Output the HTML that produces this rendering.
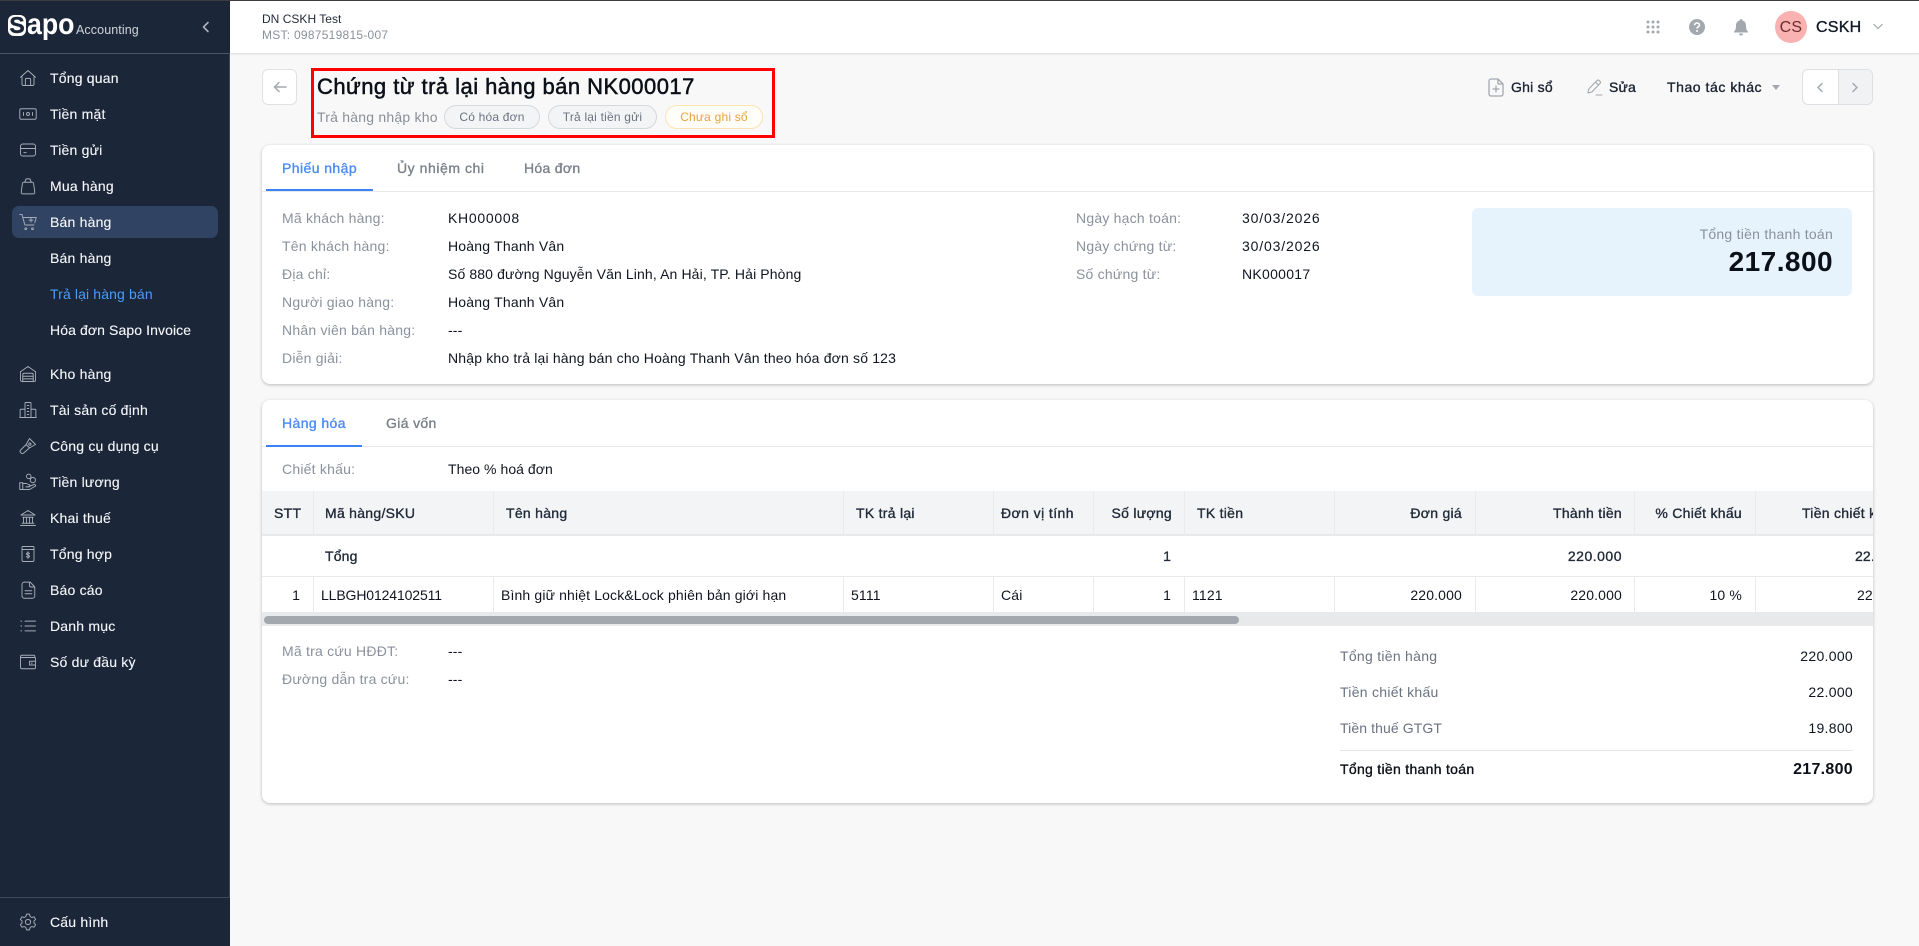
<!DOCTYPE html>
<html lang="vi"><head><meta charset="utf-8"><title>Sapo Accounting</title>
<style>
*{box-sizing:border-box}
html,body{margin:0;padding:0;width:1919px;height:946px;overflow:hidden;background:#f8f8f8;font-family:"Liberation Sans",sans-serif;font-size:14px;color:#0f1420}
.a{position:absolute}
.t{position:absolute;transform:translateY(-50%);white-space:nowrap;line-height:20px;letter-spacing:.15px}
.r{text-align:right}
.g{color:#8a919c;letter-spacing:.22px}
.m{-webkit-text-stroke:.35px currentColor}
#side{left:0;top:0;width:230px;height:946px;background:#1b2638}
.n{color:#f5f7fa;left:50px;letter-spacing:.2px;-webkit-text-stroke:.12px currentColor}
.i{position:absolute;left:19px;width:18px;height:18px;fill:none;stroke:#a6adb8;stroke-width:1.25;stroke-linecap:round;stroke-linejoin:round}
.card{position:absolute;left:262px;width:1611px;background:#fff;border-radius:8px;box-shadow:0 1px 3px rgba(0,0,0,.25)}
.pill{position:absolute;top:105px;height:24px;border-radius:12px;border:1px solid #d5d8dc;background:#f3f4f6;color:#6b7280;font-size:12px;line-height:22px;text-align:center;letter-spacing:.2px}
.th{font-size:14px;color:#1f2937;letter-spacing:.28px}
.v{position:absolute;width:1px;background:#e9eaec}
</style></head><body>
<div id="side" class="a"></div>
<div class="a" style="left:0;top:53px;width:230px;height:1px;background:#4a5568"></div>
<div class="a" style="left:0;top:897px;width:230px;height:1px;background:#3d4a5c"></div>
<div class="a" style="left:229px;top:54px;width:1px;height:843px;background:#3d4a5c"></div>

<!-- logo -->
<div class="a" style="left:8px;top:15px;width:18px;height:21px;background:#fff;border-radius:6px;color:#1b2638;font-weight:700;font-size:23px;line-height:21px;text-align:center;-webkit-text-stroke:.4px #1b2638">S</div>
<div class="t" style="left:27px;top:25px;color:#fff;font-size:30px;font-weight:700;letter-spacing:0;line-height:30px;transform:translateY(-50%) scaleX(.89);transform-origin:left center">apo</div>
<div class="t" style="left:76px;top:30px;color:#cfd4da;font-size:12.5px;letter-spacing:.1px">Accounting</div>
<svg class="a" style="left:200px;top:20px" width="12" height="14" viewBox="0 0 12 14" fill="none" stroke="#aab1bb" stroke-width="1.6" stroke-linecap="round" stroke-linejoin="round"><path d="M8 2.5 3.5 7 8 11.5"/></svg>

<!-- active -->
<div class="a" style="left:12px;top:206px;width:206px;height:32px;background:#304362;border-radius:7px"></div>

<!-- nav -->
<svg class="i" style="top:69px" viewBox="0 0 24 24"><path d="M2 11 12 2l10 9M4 9.5V20a2 2 0 0 0 2 2h12a2 2 0 0 0 2-2V9.5M8.500 22v-8a1.500 1.500 0 0 1 1.500-1.500h4a1.500 1.500 0 0 1 1.500 1.500v8"/></svg>
<div class="t n" style="top:78px">Tổng quan</div>
<svg class="i" style="top:105px" viewBox="0 0 24 24"><rect x="1" y="5" width="22" height="14" rx="2"/><circle cx="12" cy="12" r="2"/><path d="M6 10v4M18 10v4"/></svg>
<div class="t n" style="top:114px">Tiền mặt</div>
<svg class="i" style="top:141px" viewBox="0 0 24 24"><rect x="2" y="4" width="20" height="16" rx="3"/><path d="M2 10h20M6.500 15.500h3"/></svg>
<div class="t n" style="top:150px">Tiền gửi</div>
<svg class="i" style="top:177px" viewBox="0 0 24 24"><path d="M7 7h10a2 2 0 0 1 2.500 2L21 20a2 2 0 0 1-2 2.500H5A2 2 0 0 1 3 20L4.500 9A2 2 0 0 1 7 7zM7.500 7l2-4.500h5l2 4.500"/></svg>
<div class="t n" style="top:186px">Mua hàng</div>
<svg class="i" style="top:213px" viewBox="0 0 24 24"><path d="M1 2h3l3.500 13a1 1 0 0 0 1 1H20M5 6h18l-2 7M16 7v5M13.500 9.500h5"/><circle cx="9" cy="21" r="1.200"/><circle cx="18" cy="21" r="1.200"/></svg>
<div class="t n" style="top:222px">Bán hàng</div>
<div class="t n" style="top:258px">Bán hàng</div>
<div class="t" style="left:50px;top:294px;color:#4b9dfa;letter-spacing:.13px">Trả lại hàng bán</div>
<div class="t n" style="top:330px;letter-spacing:.1px">Hóa đơn Sapo Invoice</div>

<svg class="i" style="top:365px" viewBox="0 0 24 24"><path d="M2 9 12 2l10 7v11a2 2 0 0 1-2 2H4a2 2 0 0 1-2-2zM5 22V13a2 2 0 0 1 2-2h10a2 2 0 0 1 2 2v9M5 15h14M5 18.500h14"/></svg>
<div class="t n" style="top:374px">Kho hàng</div>
<svg class="i" style="top:401px" viewBox="0 0 24 24"><path d="M8 22V3a1 1 0 0 1 1-1h6a1 1 0 0 1 1 1v19M8 11H2.500a1 1 0 0 0-1 1v10M16 11h5.500a1 1 0 0 1 1 1v10M1 22h22M11 6h2M11 10h2M11 14h2M11 18h2"/></svg>
<div class="t n" style="top:410px">Tài sản cố định</div>
<svg class="i" style="top:437px" viewBox="0 0 24 24"><path d="M14 2l8 8-8 4.500L9.500 10zM9.500 10 2 17.500a2 2 0 0 0 0 3l1 1a2 2 0 0 0 3 0L14 14.500"/><circle cx="14.500" cy="9.500" r="1.500"/></svg>
<div class="t n" style="top:446px">Công cụ dụng cụ</div>
<svg class="i" style="top:473px" viewBox="0 0 24 24"><circle cx="13" cy="4.500" r="3"/><circle cx="18.500" cy="9.500" r="3.500"/><path d="M1 13h4v9H1zM5 14h5l3 1.500a1.500 1.500 0 0 1 0 3H9M13 18l7-2.500a1.500 1.500 0 0 1 2 2L14 22H5"/></svg>
<div class="t n" style="top:482px">Tiền lương</div>
<svg class="i" style="top:509px" viewBox="0 0 24 24"><path d="M2.500 8 12 2l9.500 6zM2.500 8h19M5 11h14M6 11v8M10 11v8M14 11v8M18 11v8M4 19h16M2 22h20"/></svg>
<div class="t n" style="top:518px">Khai thuế</div>
<svg class="i" style="top:545px" viewBox="0 0 24 24"><path d="M4 5.500V20a2 2 0 0 0 2 2h12a2 2 0 0 0 2-2V5.500M5 2h14a1 1 0 0 1 1 1v3H4V3a1 1 0 0 1 1-1zM14 11.500c-.500-.800-1.200-1-2-1-1.200 0-2 .600-2 1.500 0 2 4 1 4 3 0 .900-.800 1.500-2 1.500-1 0-1.700-.300-2.200-1.100M12 9v9"/></svg>
<div class="t n" style="top:554px">Tổng hợp</div>
<svg class="i" style="top:581px" viewBox="0 0 24 24"><path d="M7 1.500h8L21 8v12a3 3 0 0 1-3 3H7a3 3 0 0 1-3-3V4.500a3 3 0 0 1 3-3zM14 1.500V6a2 2 0 0 0 2 2h5M8 13h9M8 17h9"/></svg>
<div class="t n" style="top:590px">Báo cáo</div>
<svg class="i" style="top:617px" viewBox="0 0 24 24"><path d="M8 5.500h14M8 12h14M8 18.500h14M2.500 5.500h1M2.500 12h1M2.500 18.500h1"/></svg>
<div class="t n" style="top:626px">Danh mục</div>
<svg class="i" style="top:653px" viewBox="0 0 24 24"><path d="M21 6V4a1 1 0 0 0-1-1H4a2 2 0 0 0-2 2v14a2 2 0 0 0 2 2h17a1 1 0 0 0 1-1V7a1 1 0 0 0-1-1H2M14 11h8v5h-8zM16.500 13.500h1"/></svg>
<div class="t n" style="top:662px">Số dư đầu kỳ</div>
<svg class="i" style="top:913px" viewBox="0 0 24 24"><path d="M10 1.500h4l.800 3.200 2.300 1.300 3.100-.900 2 3.400-2.300 2.300v2.400l2.300 2.300-2 3.400-3.100-.900-2.300 1.300-.800 3.200h-4l-.800-3.200-2.300-1.300-3.100.900-2-3.400 2.300-2.300v-2.400L1.800 8.500l2-3.400 3.100.900 2.300-1.300z"/><circle cx="12" cy="12" r="3.500"/></svg>
<div class="t n" style="top:922px">Cấu hình</div>

<!-- header -->
<div class="a" style="left:230px;top:0;width:1689px;height:54px;background:#fff;border-bottom:1px solid #e0e1e3;box-shadow:0 1px 1px rgba(0,0,0,.04)"></div>
<div class="a" style="left:0;top:0;width:1919px;height:1px;background:#3c3c3c"></div>
<div class="t" style="left:262px;top:19px;font-size:12px;color:#1f2937;letter-spacing:.02px">DN CSKH Test</div>
<div class="t g" style="left:262px;top:35px;font-size:12px;letter-spacing:.26px">MST: 0987519815-007</div>

<svg class="a" style="left:1646px;top:20px" width="14" height="14" viewBox="0 0 14 14" fill="#a3a8af"><circle cx="2" cy="2" r="1.500"/><circle cx="7" cy="2" r="1.500"/><circle cx="12" cy="2" r="1.500"/><circle cx="2" cy="7" r="1.500"/><circle cx="7" cy="7" r="1.500"/><circle cx="12" cy="7" r="1.500"/><circle cx="2" cy="12" r="1.500"/><circle cx="7" cy="12" r="1.500"/><circle cx="12" cy="12" r="1.500"/></svg>
<svg class="a" style="left:1689px;top:19px" width="16" height="16" viewBox="0 0 16 16"><circle cx="8" cy="8" r="8" fill="#a3a8af"/><path d="M5.600 6.200C5.700 4.800 6.700 4 8 4c1.400 0 2.400.900 2.400 2 0 1.900-2.400 1.800-2.400 3.600" fill="none" stroke="#fff" stroke-width="1.600"/><circle cx="8" cy="12" r="1" fill="#fff"/></svg>
<svg class="a" style="left:1734px;top:19px" width="14" height="17" viewBox="0 0 14 17" fill="#a3a8af"><path d="M7 0a1.300 1.300 0 0 1 1.300 1.500C10.700 2.100 12 4 12 6.500c0 4 1 5 2 6.200v.8H0v-.8c1-1.200 2-2.200 2-6.200 0-2.500 1.300-4.400 3.700-5A1.300 1.300 0 0 1 7 0zM5 14.500h4a2 2 0 0 1-4 0z"/></svg>
<div class="a" style="left:1775px;top:11px;width:32px;height:32px;border-radius:50%;background:#f9b1b1;color:#6b2c2c;font-size:16px;line-height:33px;text-align:center;letter-spacing:.3px">CS</div>
<div class="t m" style="left:1816px;top:28px;font-size:16px;color:#111827;letter-spacing:.25px">CSKH</div>
<svg class="a" style="left:1873px;top:23px" width="10" height="7" viewBox="0 0 10 7" fill="none" stroke="#a3a8af" stroke-width="1.200"><path d="M.500 1 5 5.500 9.500 1"/></svg>

<!-- page head -->
<div class="a" style="left:262px;top:69px;width:35px;height:36px;background:#fff;border:1px solid #dfe1e5;border-radius:6px"></div>
<svg class="a" style="left:273px;top:81px" width="14" height="12" viewBox="0 0 14 12" fill="none" stroke="#a3a8af" stroke-width="1.500" stroke-linecap="round" stroke-linejoin="round"><path d="M13 6H1.500M6 1.500 1.500 6 6 10.500"/></svg>

<div class="a" style="left:311px;top:68px;width:464px;height:70px;border:3px solid #f00"></div>
<div class="t" style="left:317px;top:87px;font-size:22px;line-height:28px;color:#0b0f17;letter-spacing:.46px;-webkit-text-stroke:.5px #0b0f17">Chứng từ trả lại hàng bán NK000017</div>
<div class="t" style="left:317px;top:117px;color:#8a8f98;letter-spacing:.22px">Trả hàng nhập kho</div>
<div class="pill" style="left:444px;width:96px">Có hóa đơn</div>
<div class="pill" style="left:548px;width:109px">Trả lại tiền gửi</div>
<div class="pill" style="left:665px;width:98px;background:#fffdf7;border-color:#fbe3b4;color:#e6a33e">Chưa ghi sổ</div>

<svg class="a" style="left:1488px;top:78px" width="16" height="19" viewBox="0 0 16 19" fill="none" stroke="#a3a8af" stroke-width="1.300" stroke-linejoin="round" stroke-linecap="round"><path d="M3 1h7l5 5v10a2 2 0 0 1-2 2H3a2 2 0 0 1-2-2V3a2 2 0 0 1 2-2zM10 1v5h5M8 8v6M5 11h6"/></svg>
<div class="t m" style="left:1511px;top:87px;color:#1a2231;letter-spacing:.25px">Ghi sổ</div>
<svg class="a" style="left:1587px;top:79px" width="16" height="17" viewBox="0 0 16 17" fill="none" stroke="#a3a8af" stroke-width="1.100" stroke-linejoin="round" stroke-linecap="round"><path d="M1 14l.800-4L10 1.500a1.500 1.500 0 0 1 2.200 0l.800.800a1.500 1.500 0 0 1 0 2.200L4.800 13zM8.500 3l3 3M9 16h6"/></svg>
<div class="t m" style="left:1609px;top:87px;color:#1a2231;letter-spacing:.15px">Sửa</div>
<div class="t m" style="left:1667px;top:87px;color:#1a2231;letter-spacing:.55px">Thao tác khác</div>
<svg class="a" style="left:1772px;top:85px" width="8" height="5" viewBox="0 0 8 5" fill="#a3a8af"><path d="M0 0h8L4 5z"/></svg>
<div class="a" style="left:1802px;top:69px;width:71px;height:36px;background:#fff;border:1px solid #dcdfe3;border-radius:6px;overflow:hidden"><div class="a" style="left:35px;top:0;width:36px;height:36px;background:#f1f2f4;border-left:1px solid #dcdfe3"></div></div>
<svg class="a" style="left:1816px;top:82px" width="8" height="11" viewBox="0 0 8 11" fill="none" stroke="#a3a8af" stroke-width="1.500" stroke-linecap="round" stroke-linejoin="round"><path d="M6 1.500 2 5.500l4 4"/></svg>
<svg class="a" style="left:1851px;top:82px" width="8" height="11" viewBox="0 0 8 11" fill="none" stroke="#a3a8af" stroke-width="1.500" stroke-linecap="round" stroke-linejoin="round"><path d="M2 1.500l4 4-4 4"/></svg>

<!-- card 1 -->
<div class="card" style="top:145px;height:239px"></div>
<div class="a" style="left:262px;top:191px;width:1611px;height:1px;background:#e7e8ea"></div>
<div class="a" style="left:266px;top:189px;width:107px;height:2px;background:#3b82f6"></div>
<div class="t m" style="left:282px;top:168px;color:#4b8bf5;letter-spacing:.42px">Phiếu nhập</div>
<div class="t m" style="left:397px;top:168px;color:#7a808a;letter-spacing:.55px">Ủy nhiệm chi</div>
<div class="t m" style="left:524px;top:168px;color:#7a808a;letter-spacing:.3px">Hóa đơn</div>

<div class="t g" style="left:282px;top:218px">Mã khách hàng:</div><div class="t" style="left:448px;top:218px;letter-spacing:.72px">KH000008</div>
<div class="t g" style="left:282px;top:246px">Tên khách hàng:</div><div class="t" style="left:448px;top:246px;letter-spacing:.2px">Hoàng Thanh Vân</div>
<div class="t g" style="left:282px;top:274px">Địa chỉ:</div><div class="t" style="left:448px;top:274px;letter-spacing:.12px">Số 880 đường Nguyễn Văn Linh, An Hải, TP. Hải Phòng</div>
<div class="t g" style="left:282px;top:302px">Người giao hàng:</div><div class="t" style="left:448px;top:302px;letter-spacing:.2px">Hoàng Thanh Vân</div>
<div class="t g" style="left:282px;top:330px">Nhân viên bán hàng:</div><div class="t" style="left:448px;top:330px">---</div>
<div class="t g" style="left:282px;top:358px">Diễn giải:</div><div class="t" style="left:448px;top:358px;letter-spacing:.17px">Nhập kho trả lại hàng bán cho Hoàng Thanh Vân theo hóa đơn số 123</div>

<div class="t g" style="left:1076px;top:218px">Ngày hạch toán:</div><div class="t" style="left:1242px;top:218px;letter-spacing:.85px">30/03/2026</div>
<div class="t g" style="left:1076px;top:246px">Ngày chứng từ:</div><div class="t" style="left:1242px;top:246px;letter-spacing:.85px">30/03/2026</div>
<div class="t g" style="left:1076px;top:274px">Số chứng từ:</div><div class="t" style="left:1242px;top:274px;letter-spacing:.28px">NK000017</div>

<div class="a" style="left:1472px;top:208px;width:380px;height:88px;background:#e6f3fd;border-radius:6px"></div>
<div class="t g r" style="right:86px;top:234px;letter-spacing:.25px">Tổng tiền thanh toán</div>
<div class="t r" style="right:86px;top:262px;font-size:28px;line-height:32px;font-weight:700;color:#0b0f17;letter-spacing:.45px">217.800</div>

<!-- card 2 -->
<div class="card" style="top:400px;height:403px"></div>
<div class="a" style="left:262px;top:446px;width:1611px;height:1px;background:#e7e8ea"></div>
<div class="a" style="left:266px;top:445px;width:96px;height:2px;background:#3b82f6"></div>
<div class="t m" style="left:282px;top:423px;color:#4b8bf5;letter-spacing:.4px">Hàng hóa</div>
<div class="t m" style="left:386px;top:423px;color:#7a808a;letter-spacing:.35px">Giá vốn</div>
<div class="t g" style="left:282px;top:469px">Chiết khấu:</div><div class="t" style="left:448px;top:469px;letter-spacing:.05px">Theo % hoá đơn</div>

<div class="a" style="left:262px;top:491px;width:1611px;height:135px;overflow:hidden">
  <div class="a" style="left:0;top:0;width:1611px;height:44px;background:#f3f4f6"></div>
  <div class="a" style="left:0;top:43px;width:1611px;height:2px;background:#e8e9eb"></div>
  <div class="a" style="left:0;top:85px;width:1611px;height:1px;background:#e8e9eb"></div>
  <div class="v" style="left:51px;top:0;height:121px"></div>
  <div class="v" style="left:231px;top:0;height:121px"></div>
  <div class="v" style="left:581px;top:0;height:121px"></div>
  <div class="v" style="left:731px;top:0;height:121px"></div>
  <div class="v" style="left:831px;top:0;height:121px"></div>
  <div class="v" style="left:922px;top:0;height:121px"></div>
  <div class="v" style="left:1072px;top:0;height:121px"></div>
  <div class="v" style="left:1213px;top:0;height:121px"></div>
  <div class="v" style="left:1372px;top:0;height:121px"></div>
  <div class="v" style="left:1493px;top:0;height:121px"></div>
  <div class="a" style="left:0;top:45px;width:1611px;height:40px;background:#fff"></div>

  <div class="t th m" style="left:12px;top:22px">STT</div>
  <div class="t th m" style="left:63px;top:22px">Mã hàng/SKU</div>
  <div class="t th m" style="left:244px;top:22px">Tên hàng</div>
  <div class="t th m" style="left:594px;top:22px">TK trả lại</div>
  <div class="t th m" style="left:739px;top:22px;letter-spacing:.42px">Đơn vị tính</div>
  <div class="t th m r" style="right:701px;top:22px">Số lượng</div>
  <div class="t th m" style="left:935px;top:22px">TK tiền</div>
  <div class="t th m r" style="right:411px;top:22px">Đơn giá</div>
  <div class="t th m r" style="right:251px;top:22px">Thành tiền</div>
  <div class="t th m r" style="right:131px;top:22px">% Chiết khấu</div>
  <div class="t th m" style="left:1540px;top:22px">Tiền chiết khấu</div>

  <div class="t m" style="left:63px;top:65px;color:#1f2937">Tổng</div>
  <div class="t m r" style="right:702px;top:65px;color:#1f2937">1</div>
  <div class="t m r" style="right:251px;top:65px;color:#1f2937;letter-spacing:.5px">220.000</div>
  <div class="t m" style="left:1593px;top:65px;color:#1f2937">22.000</div>

  <div class="t r" style="right:1573px;top:104px">1</div>
  <div class="t" style="left:59px;top:104px;letter-spacing:-.12px">LLBGH0124102511</div>
  <div class="t" style="left:239px;top:104px;letter-spacing:.14px">Bình giữ nhiệt Lock&amp;Lock phiên bản giới hạn</div>
  <div class="t" style="left:589px;top:104px">5111</div>
  <div class="t" style="left:739px;top:104px">Cái</div>
  <div class="t r" style="right:702px;top:104px">1</div>
  <div class="t" style="left:930px;top:104px">1121</div>
  <div class="t r" style="right:411px;top:104px">220.000</div>
  <div class="t r" style="right:251px;top:104px">220.000</div>
  <div class="t r" style="right:131px;top:104px">10 %</div>
  <div class="t" style="left:1595px;top:104px">22.000</div>

  <div class="a" style="left:0;top:121px;width:1611px;height:14px;background:#e8e9eb"></div>
  <div class="a" style="left:2px;top:125px;width:975px;height:8px;background:#a3a7ae;border-radius:4px"></div>
</div>

<div class="t g" style="left:282px;top:651px">Mã tra cứu HĐĐT:</div><div class="t" style="left:448px;top:651px">---</div>
<div class="t g" style="left:282px;top:679px">Đường dẫn tra cứu:</div><div class="t" style="left:448px;top:679px">---</div>

<div class="t" style="left:1340px;top:656px;color:#6b7280;letter-spacing:.28px">Tổng tiền hàng</div><div class="t r" style="right:66px;top:656px;letter-spacing:.3px">220.000</div>
<div class="t" style="left:1340px;top:692px;color:#6b7280;letter-spacing:.28px">Tiền chiết khấu</div><div class="t r" style="right:66px;top:692px;letter-spacing:.3px">22.000</div>
<div class="t" style="left:1340px;top:728px;color:#6b7280;letter-spacing:.1px">Tiền thuế GTGT</div><div class="t r" style="right:66px;top:728px;letter-spacing:.3px">19.800</div>
<div class="a" style="left:1340px;top:750px;width:513px;height:1px;background:#e5e7ea"></div>
<div class="t m" style="left:1340px;top:769px;color:#0b0f17;letter-spacing:.3px">Tổng tiền thanh toán</div>
<div class="t r" style="right:66px;top:770px;font-size:16px;font-weight:700;color:#0b0f17;letter-spacing:.3px">217.800</div>
</body></html>
